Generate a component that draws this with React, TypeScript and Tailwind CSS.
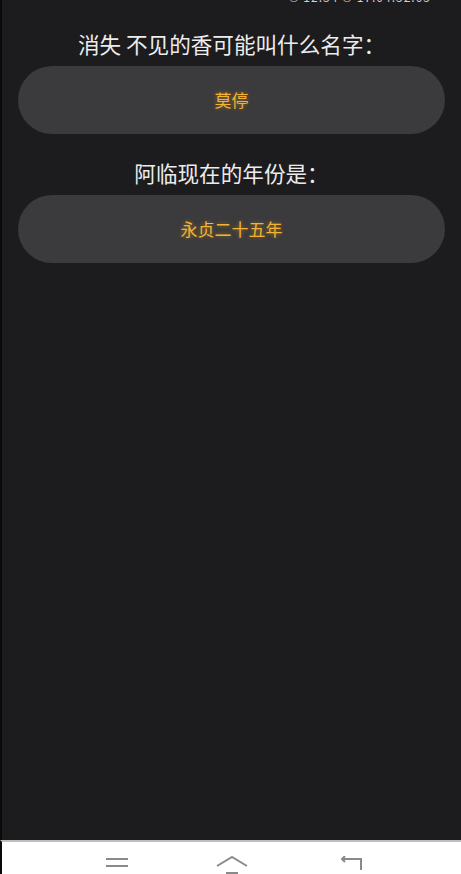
import React from "react";

const font = '"Noto Sans CJK SC", "Noto Sans", sans-serif';

function QA({ q, a }: { q: string; a: string }) {
  return (
    <div className="flex flex-col items-center">
      <div className="text-[21.6px] leading-[28px] text-[#ececec] whitespace-pre">{q}</div>
      <div className="mt-[8px] w-[427px] h-[68px] rounded-full bg-[#3b3b3d] flex items-center justify-center">
        <span
          className="text-[17px] text-[#f2b233]"
          style={{ textShadow: "0 0 4px rgba(230,150,20,0.55)" }}
        >
          {a}
        </span>
      </div>
    </div>
  );
}

export default function App() {
  return (
    <div className="w-[461px] h-[874px] flex flex-col bg-[#1c1b1e] overflow-hidden" style={{ fontFamily: font }}>
      <div className="flex-1 flex border-l-2 border-[#0a0a0a]">
        <div className="flex-1 flex flex-col">
          <div className="h-[4px] overflow-hidden flex justify-end pr-[30px]">
            <span className="text-[12px] leading-[12px] -mt-[9px] text-[#cfcfcf] tracking-[1px]">© 12:34 © 17:04:52:05</span>
          </div>
          <div className="flex flex-col gap-[25px] pt-[26px] pl-[16px] pr-[16px]">
            <QA q={"消失 不见的香可能叫什么名字："} a="莫停" />
            <QA q="阿临现在的年份是：" a="永贞二十五年" />
          </div>
        </div>
      </div>
      <div className="h-[34px] bg-white border-t-2 border-[#bdbdbd] flex items-start pt-[14px] border-l-2 border-l-[#0a0a0a] overflow-hidden">
        <svg width="24" height="20" viewBox="0 0 24 20" className="ml-[103px]">
          <line x1="1" y1="3" x2="23" y2="3" stroke="#8a8a8a" strokeWidth="2" />
          <line x1="1" y1="10" x2="23" y2="10" stroke="#8a8a8a" strokeWidth="2" />
        </svg>
        <svg width="32" height="20" viewBox="0 0 32 20" className="ml-[87px]">
          <polyline points="1,10 16,1 31,10" fill="none" stroke="#8a8a8a" strokeWidth="2" />
          <line x1="10" y1="17" x2="22" y2="17" stroke="#8a8a8a" strokeWidth="2" />
        </svg>
        <svg width="24" height="20" viewBox="0 0 24 20" className="ml-[92px]">
          <polyline points="5,0 2,3 5,6" fill="none" stroke="#8a8a8a" strokeWidth="2" />
          <polyline points="2,3 21,3 21,14" fill="none" stroke="#8a8a8a" strokeWidth="2" />
        </svg>
      </div>
    </div>
  );
}
